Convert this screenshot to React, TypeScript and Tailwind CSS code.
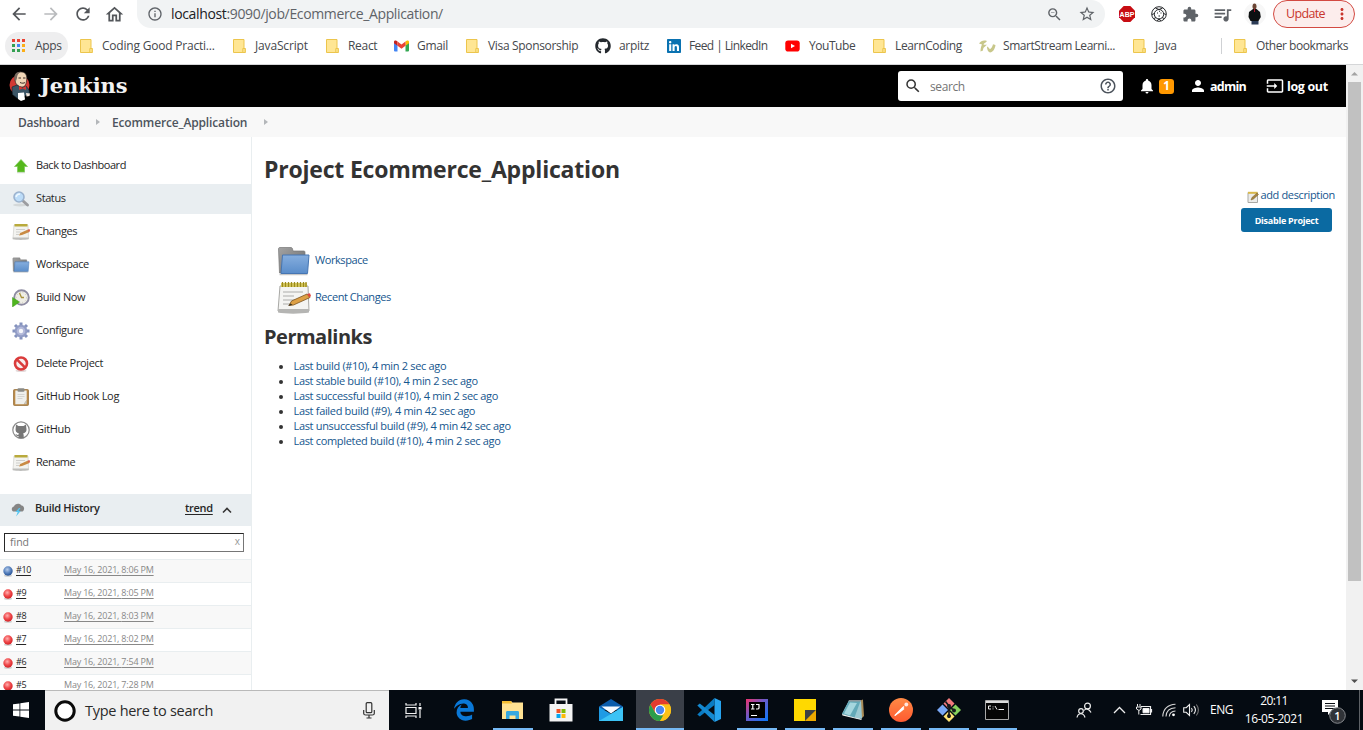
import React from "react";
import {
  MdArrowBack,
  MdArrowForward,
  MdRefresh,
  MdOutlineHome,
  MdInfoOutline,
  MdOutlineZoomOut,
  MdStarOutline,
  MdExtension,
  MdQueueMusic,
  MdMoreVert,
  MdSearch,
  MdHelpOutline,
  MdNotifications,
  MdPerson,
  MdInput,
} from "react-icons/md";
import { FaGithub, FaLinkedin } from "react-icons/fa";
import { FaEdgeLegacy } from "react-icons/fa6";

type Svg = { className?: string };

const FolderMark = () => (
  <svg width="14" height="16" viewBox="0 0 14 16">
    <path d="M.5 1.500h10.500v9h1.200v4H.5z" fill="#ffe694" stroke="#ecc54c" />
    <path d="M9.800 14.500v-4h2.400v4z" fill="#ffe694" stroke="#ecc54c" />
  </svg>
);

const AppsMark = () => (
  <svg width="14" height="14" viewBox="0 0 14 14">
    <path d="M0 0h3v3H0zM5 0h3v3H5zM10 0h3v3h-3z" fill="#ea4335" />
    <path d="M0 5h3v3H0zM0 10h3v3H0zM5 10h3v3H5z" fill="#34a053" />
    <path d="M5 5h3v3H5z" fill="#4285f4" />
    <path d="M10 5h3v3h-3zM10 10h3v3h-3z" fill="#fbae17" />
  </svg>
);

const GmailMark = () => (
  <svg width="15" height="12" viewBox="0 0 15 12">
    <path d="M0 2.200 3.500 4.800V11.500H1a1 1 0 0 1-1-1z" fill="#4285f4" />
    <path d="M15 2.200 11.500 4.800V11.500H14a1 1 0 0 0 1-1z" fill="#34a853" />
    <path d="M11.500 1.500 13 .6c1-.6 2 .1 2 1.200v1.400l-3.500 2.600z" fill="#fbbc04" />
    <path d="M3.500 1.500 2 .6C1 0 0 .7 0 1.800v1.400l3.500 2.600z" fill="#c5221f" />
    <path d="M3.500 1.500 7.500 4.500l4-3v4.300l-4 3-4-3z" fill="#ea4335" />
  </svg>
);

const YoutubeMark = () => (
  <svg width="15" height="12" viewBox="0 0 15 12">
    <rect x=".3" y=".5" width="14.400" height="11" rx="2.800" fill="#f00" />
    <path d="M6 3.700v4.600L10 6z" fill="#fff" />
  </svg>
);

const StreamMark = () => (
  <svg width="17" height="13" viewBox="0 0 17 13">
    <path d="M0 3.500C2 .8 4.500 0 8 1 6.500 3 5 3 4.500 4.500c1 .3 2 0 3.500.3C6.500 6.500 4 7 4 10.500L1.500 11.500c0-3 .5-5 1.500-7C2 4 1 3.800 0 3.500z" fill="#c8c78a" />
    <path d="M8 6.500c1.500.5 2 2 3 2.800 1.500-1 2.500-3 3-5l2.500.7C16 9 14 12.300 11 12.500 9 12.200 8 9.500 8 6.500z" fill="#c8c78a" />
  </svg>
);

const bookmarks: { label: string; width: string; text: string; icon: React.ReactNode }[] = [
  { label: "Coding Good Practi...", width: "w-[153px]", text: "pl-[8px] tracking-[-0.21px]", icon: <FolderMark /> },
  { label: "JavaScript", width: "w-[93px]", text: "pl-[8px] tracking-[-0.16px]", icon: <FolderMark /> },
  { label: "React", width: "w-[68px]", text: "pl-[8px] tracking-[-0.3px]", icon: <FolderMark /> },
  { label: "Gmail", width: "w-[72px]", text: "pl-[8px] tracking-[-0.3px]", icon: <GmailMark /> },
  { label: "Visa Sponsorship", width: "w-[129px]", text: "pl-[8px] tracking-[-0.33px]", icon: <FolderMark /> },
  { label: "arpitz", width: "w-[71px]", text: "pl-[8px] tracking-[-0.3px]", icon: <FaGithub size={16} color="#24292e" /> },
  { label: "Feed | LinkedIn", width: "w-[119px]", text: "pl-[7px] tracking-[-0.6px]", icon: <FaLinkedin size={16} color="#0a72b1" /> },
  { label: "YouTube", width: "w-[88px]", text: "pl-[9px] tracking-[-0.45px]", icon: <YoutubeMark /> },
  { label: "LearnCoding", width: "w-[106px]", text: "pl-[8px] tracking-[-0.36px]", icon: <FolderMark /> },
  { label: "SmartStream Learni...", width: "w-[154px]", text: "pl-[7px] tracking-[-0.45px]", icon: <StreamMark /> },
  { label: "Java", width: "w-[88px]", text: "pl-[8px] tracking-[-0.18px]", icon: <FolderMark /> },
];

const Avatar = () => (
  <svg width="22" height="22" viewBox="0 0 22 22">
    <circle cx="11" cy="11" r="11" fill="#f7f7f7" />
    <ellipse cx="10.500" cy="3.500" rx="2" ry="2.900" fill="#6b4433" />
    <path d="M9 6h3.500l3.500 3 .8 5-2.300 4H6.500L4.500 14 5 9z" fill="#0d1011" />
    <path d="M10.500 6v3" stroke="#b3122c" />
    <path d="M7.500 18h7v3.500h-7z" fill="#2b3b55" />
  </svg>
);

const Soccer = () => (
  <svg width="16" height="16" viewBox="0 0 16 16" fill="none" stroke="#26282b">
    <circle cx="8" cy="8" r="7.300" />
    <circle cx="8" cy="8.200" r="4.700" />
    <path d="M4.500 2 8 3.500 11.500 2M1 8.500l2.500-1M3 12.500l2-1M15 8.500l-2.500-1M13 12.500l-2-1M6 14.800l2-1.800 2 1.800" />
    <path d="M6 7h1M9.500 7h1M7.500 10h1.500M8 5.300h.8" strokeWidth="1.200" />
  </svg>
);

function Browser() {
  return (
    <header className="h-[65px] shrink-0 border-b border-[#d5d6d8] bg-white text-[#45484c]">
      <div className="flex h-[28px] items-center pl-[9px]">
        <div className="flex w-[128px] items-center gap-[12px] text-[#53565a]">
          <MdArrowBack size={20} />
          <MdArrowForward size={20} className="text-[#b9bbbd]" />
          <MdRefresh size={20} />
          <MdOutlineHome size={21} className="-ml-[1px]" />
        </div>
        <div className="flex h-[28px] w-[968px] items-center rounded-r-full rounded-bl-full bg-[#f1f3f4] pl-[10px] pr-[9px] text-[#5f6368]">
          <MdInfoOutline size={16} />
          <span className="-mt-[1px] flex-1 pl-[8px] text-[14px] tracking-[-0.355px] text-[#5f6368]">
            <span className="text-[#202124]">localhost</span>:9090/job/Ecommerce_Application/
          </span>
          <MdOutlineZoomOut size={17} />
          <MdStarOutline size={18} className="ml-[15px]" />
        </div>
        <div className="flex items-center pl-[14px] text-[#5f6368]">
          <svg width="16" height="16" viewBox="0 0 16 16">
            <path d="M4.700 0h6.600L16 4.700v6.600L11.300 16H4.700L0 11.300V4.700z" fill="#c70d13" />
            <text x="8" y="10.800" textAnchor="middle" fontFamily="Liberation Sans" fontWeight="700" fontSize="7" fill="#fff">ABP</text>
          </svg>
          <span className="ml-[16px]"><Soccer /></span>
          <MdExtension size={17} className="ml-[15px]" />
          <MdQueueMusic size={21} className="ml-[13px]" />
          <span className="ml-[11px]"><Avatar /></span>
          <button className="ml-[7px] flex h-[28px] w-[82px] items-center rounded-full border border-[#d34a42] bg-[#fcedec] pl-[12px] text-[12.500px] tracking-[-0.65px] text-[#c9362d]">
            <span className="w-[46px] text-left">Update</span>
            <MdMoreVert size={18} className="ml-[1px]" />
          </button>
        </div>
      </div>
      <div className="flex h-[36px] items-center whitespace-nowrap text-[12px]">
        <div className="ml-[5px] mr-[12px] flex h-[28px] w-[63px] items-center rounded-full bg-[#eeeeef] pl-[7px]">
          <AppsMark />
          <span className="pl-[9px] tracking-[-0.3px]">Apps</span>
        </div>
        {bookmarks.map((b) => (
          <div key={b.label} className={`flex shrink-0 items-center ${b.width}`}>
            {b.icon}
            <span className={b.text}>{b.label}</span>
          </div>
        ))}
        <div className="h-[16px] w-px bg-[#cfd1d4]" />
        <div className="flex items-center pl-[12px]">
          <FolderMark />
          <span className="pl-[8px] tracking-[-0.44px]">Other bookmarks</span>
        </div>
      </div>
    </header>
  );
}

const Butler = () => (
  <svg width="22" height="30" viewBox="0 0 22 30">
    <circle cx="10.500" cy="14" r="10" fill="#d33833" />
    <path d="M6 8c0-5 3-7.500 7-7 4 .5 5.500 4 4.500 9-.5 4-2 6-4.500 6-4 0-7-3-7-8z" fill="#f0d6b7" stroke="#2b2522" strokeWidth=".7" />
    <path d="M5.500 9C4.500 4 7 .5 12 .8 9.500 2 8 4 8 7l-1 3z" fill="#77695f" />
    <path d="M9.500 7h2.500M14 7h2.500M11 11.500c2 1 4 .8 5 0" stroke="#3c2b25" fill="none" />
    <path d="M3 16l5-2 5 3 4-2 3 4 .5 4-5 2-7 2.500-5-4z" fill="#3c5565" stroke="#14222b" strokeWidth=".6" />
    <path d="M10 15l3.500 2 3.500-2v4l-3.500-1.500L10 19z" fill="#d33833" />
    <path d="M9 22l6-.5 1 7-4 1.500-3-2z" fill="#fff" />
    <path d="M17 22l4 .5-.5 2.500-3 .5z" fill="#f1e5dc" />
  </svg>
);

function JenkinsHeader() {
  return (
    <div className="flex h-[42px] shrink-0 items-center bg-black pl-[9px] text-white">
      <Butler />
      <span className="-mt-[1px] flex-1 pl-[9px] font-['DejaVu_Serif',serif] text-[21px] font-bold leading-[30px] tracking-[-0.1px] text-[#f2f2f2]">Jenkins</span>
      <div className="flex h-[30px] w-[225px] items-center rounded-[3px] bg-white px-[6px] text-[#333]">
        <MdSearch size={18} />
        <span className="flex-1 pl-[8px] pt-[2px] text-[12px] tracking-[-0.4px] text-[#757575]">search</span>
        <MdHelpOutline size={18} className="text-[#4d545d]" />
      </div>
      <MdNotifications size={18} className="ml-[15px]" />
      <span className="ml-[3px] flex h-[15px] w-[15px] items-center justify-center rounded-[3px] bg-[#ff9800] text-[11.500px] font-bold">1</span>
      <MdPerson size={18} className="ml-[15px]" />
      <span className="ml-[3px] w-[56px] pt-[2px] text-[12.500px] font-bold tracking-[-0.75px]">admin</span>
      <MdInput size={18} />
      <span className="ml-[3px] mr-[17px] w-[42px] whitespace-nowrap pt-[2px] text-[12.500px] font-bold tracking-[-0.35px]">log out</span>
    </div>
  );
}

const Notepad = ({ className }: Svg) => (
  <svg className={className} viewBox="0 0 34 34">
    <path d="M3 5h28l1 25c0 2-30 2-31 0z" fill="#f4f4f2" stroke="#a8a8a5" />
    <path d="M1 28h31v3.500c-8 1.500-24 1.500-31 0z" fill="#b5b5b3" />
    <path d="M4 2h26v4H4z" fill="#d9cc62" />
    <path d="M5.500 1v5M8.500 1v5M11.500 1v5M14.500 1v5M17.500 1v5M20.500 1v5M23.500 1v5M26.500 1v5M29 1v5" stroke="#9b8a1c" strokeWidth="1.300" />
    <path d="M6 11h20M6 15h11M6 19h13M6 23h8" stroke="#c4c4c2" strokeWidth="1.300" />
    <path d="M12 24.500l2.500-4.500L30 13l3 3.500L16.500 24z" fill="#dda045" stroke="#7a5320" strokeWidth=".8" />
    <path d="M30 13l3-.8 1 2.800-1.500 1.500z" fill="#e0483e" />
    <path d="M11 25l2.500-2.500 2 1.200z" fill="#3f3523" />
  </svg>
);

const SmallNotepad = () => (
  <svg width="18" height="18" viewBox="0 0 18 18">
    <path d="M2 2h14l.5 13.500H1z" fill="#f3f3f0" stroke="#d0d0cc" strokeWidth=".7" />
    <path d="M.7 14.500h16v1.800c-4 .8-12 .8-16 0z" fill="#bdbdbb" />
    <path d="M2.500 1h13v2.500h-13z" fill="#b9aa3c" />
    <path d="M4 6.500h9M4 9h4.500M4 11.500h3" stroke="#cfcfcc" />
    <path d="M7 12.500 8.200 10l7.300-3.300L17.500 9 10 12z" fill="#c98b44" />
    <path d="M15.500 6.700l2-.7.500 2-1 1z" fill="#d85a45" />
  </svg>
);

const Folder = ({ className }: Svg) => (
  <svg className={className} viewBox="0 0 34 30">
    <defs>
      <linearGradient id="folder-front" x1="0" y1="0" x2="0" y2="1">
        <stop offset="0" stopColor="#86aede" />
        <stop offset="1" stopColor="#5a8dca" />
      </linearGradient>
      <linearGradient id="folder-back" x1="0" y1="0" x2="1" y2="1">
        <stop offset="0" stopColor="#a3a3a3" />
        <stop offset="1" stopColor="#6b6b6b" />
      </linearGradient>
    </defs>
    <path d="M1.500 3c0-1 .5-1.500 1.500-1.500H14c1 0 1.500 1 1.500 1.500l.5 2h11c1 0 1 1 1 2v20H2.500z" fill="url(#folder-back)" stroke="#777" strokeWidth=".7" />
    <path d="M5.500 9H32l-1.500 18.500H4z" fill="url(#folder-front)" stroke="#4676b3" />
    <path d="M2.500 28.700h28" stroke="#bbb" />
  </svg>
);

const UpArrow = () => (
  <svg width="18" height="18" viewBox="0 0 18 18">
    <path d="M9 2.500 15.500 9.500H12.500V15h-7V9.500H2.500z" fill="#55b81c" stroke="#7cc957" strokeWidth=".7" />
    <path d="M5 15.700h8" stroke="#c9d8c2" />
  </svg>
);

const Magnifier = () => (
  <svg width="18" height="18" viewBox="0 0 18 18">
    <ellipse cx="8" cy="15" rx="7" ry="1.500" fill="#d4d8d9" />
    <path d="M10.500 10.500 15.500 15" stroke="#9c9da1" strokeWidth="3" strokeLinecap="round" />
    <circle cx="7" cy="7" r="5" fill="#bcdcf8" stroke="#9bb2ce" strokeWidth="1.600" />
    <path d="M4 7c.5-2 2-3 4-3" stroke="#eef8ff" strokeWidth="1.500" fill="none" />
  </svg>
);

const BuildNow = () => (
  <svg width="18" height="18" viewBox="0 0 18 18">
    <circle cx="9.500" cy="8.500" r="7.300" fill="#efeee6" stroke="#8e8ca2" strokeWidth="1.900" />
    <circle cx="9.500" cy="8.500" r="5" fill="none" stroke="#cbc9bd" strokeDasharray="1 2" />
    <path d="M7.500 4 9.500 8.500h2.500" stroke="#a8923c" strokeWidth="1.300" fill="none" />
    <path d="M.5 8.500 7.500 13l-7 5z" fill="#4fb51f" stroke="#3f9a18" strokeWidth=".5" />
  </svg>
);

const Gear = () => (
  <svg width="18" height="18" viewBox="0 0 18 18">
    <g fill="none" stroke="#8492bd" strokeWidth="3">
      <path d="M9 .5v17M.5 9h17M3 3l12 12M15 3 3 15" />
    </g>
    <circle cx="9" cy="9" r="6.300" fill="#929dc6" />
    <circle cx="9" cy="9" r="4.300" fill="#b3b9da" />
    <circle cx="9" cy="9" r="2.200" fill="#f6f7fc" />
  </svg>
);

const NoEntry = () => (
  <svg width="18" height="18" viewBox="0 0 18 18">
    <ellipse cx="9" cy="15.800" rx="5.500" ry="1.200" fill="#e4dada" />
    <circle cx="9" cy="8.500" r="6" fill="#f8eeee" stroke="#da3c3c" strokeWidth="2.600" />
    <path d="M4.800 4.300l8.400 8.400" stroke="#da3c3c" strokeWidth="2.600" />
  </svg>
);

const Clipboard = () => (
  <svg width="18" height="18" viewBox="0 0 18 18">
    <rect x="1.500" y="1.500" width="15" height="16" rx="1" fill="#b98845" stroke="#9a7440" strokeWidth=".8" />
    <path d="M3.300 2.500h11.400v9.500l-3 4.300H3.300z" fill="#efefec" />
    <path d="M14.700 12v4.300h-3z" fill="#c7c7c3" />
    <path d="M5.500 6.500h7M5.500 8.500h7M5.500 10.500h5" stroke="#d4d4d1" />
    <rect x="5.500" y=".3" width="7" height="3.500" rx="1" fill="#8b8b86" />
  </svg>
);

const Octocat = () => (
  <svg width="18" height="18" viewBox="0 0 18 18">
    <circle cx="9" cy="9" r="8.200" fill="#fff" stroke="#8b8b8b" strokeWidth="1.200" />
    <path d="M4 3.500 6.500 5h5L14 3.500 14.300 7c.8 3-.7 5-3.300 5.500.6.600.7 1.200.7 2V17.500H6.500v-2.500C5 15.200 4 14.500 3.500 13c1 .2 1.700 1.200 3 .8 0-.5.200-.9.500-1.300C4.400 12 3 10 3.700 7z" fill="#777" />
  </svg>
);

const tasks: { label: string; icon: React.ReactNode; text: string; active?: boolean }[] = [
  { label: "Back to Dashboard", icon: <UpArrow />, text: "tracking-[-0.43px]" },
  { label: "Status", icon: <Magnifier />, text: "tracking-[-0.4px]", active: true },
  { label: "Changes", icon: <SmallNotepad />, text: "tracking-[-0.4px]" },
  { label: "Workspace", icon: <Folder className="h-[16px] w-[18px]" />, text: "tracking-[-0.42px]" },
  { label: "Build Now", icon: <BuildNow />, text: "tracking-[-0.35px]" },
  { label: "Configure", icon: <Gear />, text: "tracking-[-0.33px]" },
  { label: "Delete Project", icon: <NoEntry />, text: "tracking-[-0.35px]" },
  { label: "GitHub Hook Log", icon: <Clipboard />, text: "tracking-[-0.29px]" },
  { label: "GitHub", icon: <Octocat />, text: "tracking-[-0.3px]" },
  { label: "Rename", icon: <SmallNotepad />, text: "tracking-[-0.5px]" },
];

const builds = [
  { id: "#10", time: "8:06 PM", ok: true },
  { id: "#9", time: "8:05 PM" },
  { id: "#8", time: "8:03 PM" },
  { id: "#7", time: "8:02 PM" },
  { id: "#6", time: "7:54 PM" },
  { id: "#5", time: "7:28 PM" },
];

const Ball = ({ ok }: { ok?: boolean }) => (
  <svg width="10" height="11" viewBox="0 0 10 11">
    <defs>
      <radialGradient id={ok ? "ball-ok" : "ball-bad"} cx=".42" cy=".35" r=".6">
        <stop offset="0" stopColor={ok ? "#b9cdea" : "#ffb0b0"} />
        <stop offset=".6" stopColor={ok ? "#5b84c0" : "#f04a4c"} />
        <stop offset="1" stopColor={ok ? "#2f5a9c" : "#d8282c"} />
      </radialGradient>
    </defs>
    <ellipse cx="5" cy="9.800" rx="4" ry="1" fill="#ccc" />
    <circle cx="5" cy="5" r="4.700" fill={ok ? "url(#ball-ok)" : "url(#ball-bad)"} />
  </svg>
);

function Sidebar() {
  return (
    <aside className="flex w-[252px] shrink-0 flex-col overflow-hidden border-r border-[#e9eef0] pt-[14px] text-[#262626]">
      <nav className="flex flex-col gap-[3px] text-[11px]">
        {tasks.map((t) => (
          <div key={t.label} className={`flex h-[30px] shrink-0 items-center pl-[12px] ${t.active ? "bg-[#e9eef1]" : ""}`}>
            <span className="flex h-[18px] w-[24px] items-center">{t.icon}</span>
            <span className={`-mt-[2px] ${t.text}`}>{t.label}</span>
          </div>
        ))}
      </nav>
      <div className="mt-[16px] flex h-[32px] shrink-0 items-center bg-[#e9eef1] pl-[11px] text-[11px] font-semibold">
        <svg width="14" height="14" viewBox="0 0 14 14" className="shrink-0">
          <path d="M2 8.500C0 7 .5 4 3 3.500c1-3.500 6-3.500 7.500-1 3 .2 3.500 4.500 1 6z" fill="#858585" />
          <path d="M8 5 4.500 9h2.200L5 13.500 9.700 8H7.500l2-3z" fill="#55c5f0" />
        </svg>
        <span className="-mt-[3px] w-[160px] shrink-0 pl-[10px] tracking-[-0.3px]">Build History</span>
        <span className="-mt-[3px] w-[37px] shrink-0 tracking-[-0.3px] underline decoration-1 underline-offset-2">trend</span>
        <svg width="10" height="10" viewBox="0 0 10 10" className="shrink-0" fill="none" stroke="#333" strokeWidth="1.600">
          <path d="M1 7.500l4-4 4 4" />
        </svg>
      </div>
      <div className="ml-[4px] mt-[7px] flex h-[19px] w-[240px] shrink-0 items-center justify-between border border-b-[#767676] border-l-[#262626] border-r-[#767676] border-t-[#262626] pl-[5px] pr-[3px] text-[10.500px] text-[#757575]">
        <span>find</span>
        <span className="-mt-[3px] text-[10px] text-[#999]">x</span>
      </div>
      <div className="mt-[7px] text-[9px]">
        {builds.map((b, i) => (
          <div key={b.id} className={`flex h-[23px] items-center border-t border-[#e9eef0] pl-[3px] ${i % 2 === 0 ? "bg-[#f8f8f8]" : "bg-white"}`}>
            <span className="pt-[1px]"><Ball ok={b.ok} /></span>
            <span className="-mt-[2px] w-[51px] pl-[3px] tracking-[-0.4px] underline underline-offset-2">{b.id}</span>
            <span className="-mt-[2px] tracking-[-0.2px] text-[#888] underline underline-offset-2">May 16, 2021, {b.time}</span>
          </div>
        ))}
      </div>
    </aside>
  );
}

const permalinks = [
  "Last build (#10), 4 min 2 sec ago",
  "Last stable build (#10), 4 min 2 sec ago",
  "Last successful build (#10), 4 min 2 sec ago",
  "Last failed build (#9), 4 min 42 sec ago",
  "Last unsuccessful build (#9), 4 min 42 sec ago",
  "Last completed build (#10), 4 min 2 sec ago",
];

function MainPanel() {
  return (
    <main className="flex flex-1 flex-col pl-[12px] text-[#333]">
      <h1 className="mt-[15px] h-[35px] text-[23px] font-bold leading-[34px] tracking-[-0.2px]">Project Ecommerce_Application</h1>
      <div className="flex h-[16px] items-center justify-end pr-[11px] text-[11px] text-[#15568e]">
        <svg width="12" height="12" viewBox="0 0 12 12" className="mr-[1px] mt-[3px]">
          <path d="M1 1.500h9.500V11.500H1z" fill="#ececea" stroke="#a9a9a4" />
          <path d="M1 .8h9.500v2H1z" fill="#d8b84b" />
          <path d="M4 9l1-2.500L10 2l1.500 1.500L6.500 8z" fill="#a58443" stroke="#7d6126" strokeWidth=".5" />
        </svg>
        <span className="tracking-[-0.36px]">add description</span>
      </div>
      <button className="mr-[14px] mt-[5px] h-[24px] w-[91px] self-end rounded-[3px] bg-[#0b6aa2] pt-px text-[9px] font-bold tracking-[-0.24px] text-white">Disable Project</button>
      <div className="mt-[10px] flex flex-col pl-[13px] text-[11px] text-[#15568e]">
        <div className="flex h-[37px] items-center gap-[4px]">
          <Folder className="h-[30px] w-[34px]" />
          <span className="tracking-[-0.42px]">Workspace</span>
        </div>
        <div className="flex h-[37px] items-center gap-[4px]">
          <Notepad className="h-[34px] w-[34px]" />
          <span className="tracking-[-0.44px]">Recent Changes</span>
        </div>
      </div>
      <h2 className="mt-[6px] h-[29px] text-[20px] font-bold leading-[30px] tracking-[-0.5px]">Permalinks</h2>
      <ul className="mt-[7px] text-[11px] leading-[15px] tracking-[-0.325px] text-[#15568e]">
        {permalinks.map((p) => (
          <li key={p} className="flex items-center pl-[15px]">
            <span className="mr-[10.500px] mt-[2px] h-[4px] w-[4px] rounded-full bg-[#333]" />
            {p}
          </li>
        ))}
      </ul>
    </main>
  );
}

const Crumb = () => (
  <svg width="4" height="6" viewBox="0 0 4 6">
    <path d="M0 0l4 3-4 3z" fill="#b4b7ba" />
  </svg>
);

function Page() {
  return (
    <div className="flex min-h-0 flex-1 bg-white">
      <div className="flex min-w-0 flex-1 flex-col overflow-hidden">
        <JenkinsHeader />
        <div className="flex h-[30px] shrink-0 items-center bg-[#f8f8f8] pl-[18px] text-[12px] font-semibold tracking-[-0.15px] text-[#4d545d]">
          <span className="w-[78px] pt-[2px] tracking-[-0.25px]">Dashboard</span>
          <Crumb />
          <span className="w-[164px] pl-[12px] pt-[2px]">Ecommerce_Application</span>
          <Crumb />
        </div>
        <div className="flex min-h-0 flex-1">
          <Sidebar />
          <MainPanel />
        </div>
      </div>
      <div className="flex w-[17px] flex-col items-center bg-[#f1f1f1]">
        <svg width="17" height="17" viewBox="0 0 17 17"><path d="M5 10.500h7L8.500 7z" fill="#a3a3a3" /></svg>
        <div className="h-[499px] w-[13px] bg-[#c1c1c1]" />
        <div className="flex-1" />
        <svg width="17" height="17" viewBox="0 0 17 17"><path d="M5 6.500h7L8.500 10z" fill="#505050" /></svg>
      </div>
    </div>
  );
}

const Chrome = () => (
  <svg width="24" height="24" viewBox="0 0 24 24">
    <circle cx="12" cy="12" r="11" fill="#fbc116" />
    <path d="M2.470 6.500A11 11 0 0 1 21.530 6.500L12 6.500 7.240 14.750z" fill="#e33b2e" />
    <path d="M2.470 6.500 7.240 14.750 12 17.500h4.760L12 23A11 11 0 0 1 2.470 6.500z" fill="#2a9d4c" />
    <path d="M12 6.500h9.530A11 11 0 0 1 12 23l4.760-8.250z" fill="#fbc116" />
    <circle cx="12" cy="12" r="5.300" fill="#fff" />
    <circle cx="12" cy="12" r="4.200" fill="#4a86f0" />
  </svg>
);

const Explorer = () => (
  <svg width="24" height="24" viewBox="0 0 24 24">
    <path d="M1 3h9l1.500 1.500H22v16.500H1z" fill="#ffe293" />
    <path d="M1 3h9l1 2.500H1z" fill="#f4bd33" />
    <path d="M5 21v-6.500c0-1 .5-1.500 1.500-1.500h10c1 0 1.500.5 1.500 1.500V21h-3.500v-3.500h-6V21z" fill="#36a8e0" />
  </svg>
);

const Store = () => (
  <svg width="24" height="24" viewBox="0 0 24 24">
    <path d="M6.500 7V1.500h11V7" fill="none" stroke="#f5f5f5" strokeWidth="1.800" />
    <path d="M.5 6h23v17.500H.5z" fill="#f3f3f3" />
    <path d="M7.500 11h4v4h-4z" fill="#f35325" />
    <path d="M12.500 11h4v4h-4z" fill="#81bc06" />
    <path d="M7.500 16h4v4h-4z" fill="#05a6f0" />
    <path d="M12.500 16h4v4h-4z" fill="#ffba08" />
  </svg>
);

const Mail = () => (
  <svg width="24" height="24" viewBox="0 0 24 24">
    <path d="M0 8.500 12 1l12 7.500V12H0z" fill="#0b5cab" />
    <path d="M0 9v14h24V9L12 16z" fill="#1f9be4" />
    <path d="M24 9v14H0l17-10z" fill="#3cc3f5" />
    <path d="M2.500 8.500h19L12 15.500z" fill="#f7fbff" />
  </svg>
);

const Code = () => (
  <svg width="24" height="24" viewBox="0 0 24 24">
    <path d="M17.500 0 24 3v18l-6.500 3z" fill="#27a4ef" />
    <path d="M17.500 0v7L2.800 18.500.3 16.500z" fill="#0a7bc2" />
    <path d="M17.500 24v-7L2.800 5.500.3 7.500z" fill="#1489d1" />
  </svg>
);

const Idea = () => (
  <svg width="22" height="22" viewBox="0 0 22 22">
    <defs>
      <linearGradient id="idea" x1="0" y1="0" x2="1" y2="1">
        <stop offset="0" stopColor="#f0316b" />
        <stop offset=".45" stopColor="#6a5bc9" />
        <stop offset="1" stopColor="#0878fb" />
      </linearGradient>
    </defs>
    <path d="M0 0h22v22H0z" fill="url(#idea)" />
    <path d="M3 3h16v16H3z" fill="#000" />
    <path d="M5 5.500h3.500M6.800 5.500v4.500M5 10h3.500M10 5.500h3v3.500q0 1-1.500 1H10M5 16.500h6" stroke="#fff" strokeWidth="1.200" fill="none" />
  </svg>
);

const Sticky = () => (
  <svg width="22" height="22" viewBox="0 0 22 22">
    <path d="M0 0h22v11l-11 11H0z" fill="#ffd900" />
    <path d="M11 11h11L11 22z" fill="#3d4043" />
    <path d="M22 11v11H11z" fill="#eda900" />
  </svg>
);

const Notebook = () => (
  <svg width="24" height="24" viewBox="0 0 24 24">
    <path d="M18 3 22 1.500 23 18l-3 3z" fill="#a98c58" />
    <path d="M8 2.500 20 2.500 21 20.500 18 21 1 16z" fill="#9cc9d2" />
    <path d="M8 2.500 19.500 3 13.500 19.500 1 16z" fill="#63a9b8" />
    <path d="M9 4.500 16 5 9 17.500 3 15.500z" fill="#a5d6de" />
    <path d="M1 16 13.500 19.500 20.500 21v1L1.500 17.500z" fill="#f3f7f7" />
    <path d="M8 2h12v1.500H7.500z" fill="#8e979b" />
  </svg>
);

const Postman = () => (
  <svg width="24" height="24" viewBox="0 0 24 24">
    <defs>
      <linearGradient id="postman" x1="0" y1="0" x2="0" y2="1">
        <stop offset="0" stopColor="#ff8a45" />
        <stop offset="1" stopColor="#ff5a30" />
      </linearGradient>
    </defs>
    <circle cx="12" cy="12" r="12" fill="url(#postman)" />
    <path d="M4.500 18.500 13.500 9l2 2-5 4z" fill="#fff" />
    <path d="M6 17.500 15 8.500" stroke="#fff" strokeWidth="1.500" />
    <circle cx="17.300" cy="6.500" r="1.900" fill="#ffe8df" />
  </svg>
);

const Git = () => (
  <svg width="24" height="24" viewBox="0 0 24 24">
    <path d="M12 0l5.500 5.500L12 11 6.500 5.500z" fill="#f17a7c" />
    <path d="M18.500 6.500 24 12l-5.500 5.500L13 12z" fill="#86d15c" />
    <path d="M12 13l5.500 5.500L12 24l-5.500-5.500z" fill="#ffe375" />
    <path d="M5.500 6.500 11 12l-5.500 5.500L0 12z" fill="#7aa8f5" />
    <path d="M8.500 3.500 12 8v12M12 9l5 3" stroke="#15191c" strokeWidth="1.700" fill="none" />
    <circle cx="12" cy="8" r="2" fill="#15191c" />
    <circle cx="17" cy="12.500" r="2" fill="#15191c" />
    <circle cx="12" cy="18" r="2" fill="#15191c" />
  </svg>
);

const Terminal = () => (
  <svg width="24" height="20" viewBox="0 0 24 20">
    <path d="M.5.5h23v19H.5z" fill="#050505" stroke="#a8a8a8" />
    <path d="M1 1h22v2H1z" fill="#dcdcdc" />
    <path d="M6 6H3.500v3H6M8 6.500v.8M8 8.500v.8M10 6l2 3.500M13.500 9.500H19" stroke="#eee" fill="none" />
  </svg>
);

const TaskView = () => (
  <svg width="17" height="17" viewBox="0 0 17 17" fill="none" stroke="#f2f2f2" strokeWidth="1.200">
    <path d="M1 5.500h10v6H1zM1 1v2h10V1M1 16v-2h10v2M15 1v3M15 8v8" />
    <path d="M13.500 5h3v2.500h-3z" fill="#fff" stroke="none" />
  </svg>
);

const apps: { name: string; icon: React.ReactNode; gap?: string; open?: boolean; active?: boolean }[] = [
  { name: "task-view", icon: <TaskView /> },
  { name: "edge", icon: <FaEdgeLegacy size={22} color="#0a78d7" />, gap: "ml-[3px]" },
  { name: "explorer", icon: <Explorer />, gap: "ml-[1px]", open: true },
  { name: "store", icon: <Store /> },
  { name: "mail", icon: <Mail />, gap: "ml-[2px]" },
  { name: "chrome", icon: <Chrome />, gap: "ml-[1px]", active: true },
  { name: "code", icon: <Code />, gap: "ml-[1px]" },
  { name: "idea", icon: <Idea />, open: true },
  { name: "sticky", icon: <Sticky />, open: true },
  { name: "notebook", icon: <Notebook />, open: true },
  { name: "postman", icon: <Postman />, open: true },
  { name: "git", icon: <Git />, open: true },
  { name: "terminal", icon: <Terminal />, open: true },
];

function Taskbar() {
  return (
    <footer className="flex h-[40px] shrink-0 bg-[#050b12] text-white">
      <div className="flex w-[45px] items-center pl-[13px]">
        <svg width="16" height="16" viewBox="0 0 16 16" fill="#fff">
          <path d="M0 2.300 6.500 1.400v6.200H0zM7.300 1.300 16 0v7.600H7.300zM0 8.400h6.500v6.200L0 13.700zM7.300 8.400H16V16l-8.700-1.300z" />
        </svg>
      </div>
      <div className="flex w-[344px] items-center border-t border-[#b9b9b9] bg-[#f1f1f1] pl-[9px] text-[#2b2b2b]">
        <svg width="22" height="22" viewBox="0 0 22 22">
          <circle cx="11" cy="11" r="9.200" fill="#fff" stroke="#0a0a0a" strokeWidth="3" />
        </svg>
        <span className="w-[287px] shrink-0 pl-[9px] text-[14.500px] tracking-[-0.28px]">Type here to search</span>
        <svg width="12" height="17" viewBox="0 0 12 17" fill="none" stroke="#333" strokeWidth="1.200">
          <rect x="3.200" y=".7" width="5.600" height="10" rx="1" />
          <path d="M.7 8v3.500q0 1.500 2 1.500h6.600q2 0 2-1.500V8M6 13v3M3.500 16h5" />
        </svg>
      </div>
      <div className="flex">
        {apps.map((a) => (
          <div key={a.name} className={`flex h-[40px] w-[48px] flex-col items-center ${a.gap ?? ""} ${a.active ? "bg-[#3a3f48]" : ""}`}>
            <div className="flex h-[38px] items-center justify-center pt-[2px]">{a.icon}</div>
            <div className={`h-[2px] ${a.active ? "w-full bg-[#76b9f5]" : a.open ? "w-[40px] bg-[#76b9f5]" : ""}`} />
          </div>
        ))}
      </div>
      <div className="flex flex-1 items-center pl-[55px]">
        <svg width="17" height="17" viewBox="0 0 17 17" fill="none" stroke="#eee" strokeWidth="1.200">
          <circle cx="11.500" cy="4" r="2.900" />
          <circle cx="5" cy="9" r="2.300" />
          <path d="M8 8.500c1.500-2 5-2.500 7 2M1 15.500c1-5 6.500-5 8 0" />
        </svg>
        <svg width="13" height="8" viewBox="0 0 13 8" className="ml-[20px]" fill="none" stroke="#eee" strokeWidth="1.300">
          <path d="M1 7l5.500-5.500L12 7" />
        </svg>
        <svg width="17" height="12" viewBox="0 0 17 12" className="ml-[10px]" fill="none" stroke="#eee">
          <path d="M5 2.500h9.500v8H4.500M15.500 5v3.500" strokeWidth="1.200" />
          <path d="M7 4.500h6v4.300H7z" fill="#fff" />
          <path d="M1.500 0v2.500M4 0v2.500M.5 3h4.500v2L3 6.500.5 5zM2.800 6.500v4" />
        </svg>
        <svg width="14" height="14" viewBox="0 0 14 14" className="ml-[9px]" fill="none" stroke="#d5d5d5" strokeWidth="1.100">
          <path d="M.8 13.500C1 6 6 1.500 13.500 1.200M4 13.500C4.200 8 8 5 13.500 4.700M7.300 13.500c.2-3.500 2.700-5.300 6.200-5.500" />
          <circle cx="11.500" cy="11.800" r="1.400" fill="#fff" stroke="none" />
        </svg>
        <svg width="17" height="14" viewBox="0 0 17 14" className="ml-[7px]" fill="none" stroke="#eee" strokeWidth="1.100">
          <path d="M.7 4.700h2.500L6.500 1.500v11L3.200 9.300H.7zM8.500 5c.9 1.200.9 2.800 0 4M10.800 3.200c1.900 2.200 1.900 5.400 0 7.600" />
          <path d="M13.300 1.500c2.800 3.200 2.800 7.800 0 11" stroke="#777" />
        </svg>
        <span className="-mt-[1px] ml-[10px] w-[32px] text-[12px] tracking-[-0.5px]">ENG</span>
        <div className="flex w-[64px] flex-col items-center whitespace-nowrap text-[12px] leading-[18px] tracking-[-0.42px]">
          <span className="tracking-[-0.6px]">20:11</span>
          <span>16-05-2021</span>
        </div>
        <svg width="26" height="26" viewBox="0 0 26 26" className="ml-[16px] mt-[4px]">
          <path d="M0 1h16v12H9l-3 3v-3H0z" fill="#fff" />
          <path d="M3 4.500h10M3 7h10M3 9.500h10" stroke="#0a0f15" strokeWidth="1.100" />
          <circle cx="15.500" cy="16.500" r="7.800" fill="#303338" stroke="#85888c" />
          <text x="15.500" y="20.500" textAnchor="middle" fontFamily="Open Sans" fontWeight="600" fontSize="11" fill="#fff">1</text>
        </svg>
      </div>
      <div className="mr-[3px] w-px bg-[#5d6166]" />
    </footer>
  );
}

export default function App() {
  return (
    <div className="flex h-[730px] w-[1363px] flex-col overflow-hidden bg-white font-['Open_Sans','Noto_Sans',sans-serif]">
      <Browser />
      <Page />
      <Taskbar />
    </div>
  );
}
